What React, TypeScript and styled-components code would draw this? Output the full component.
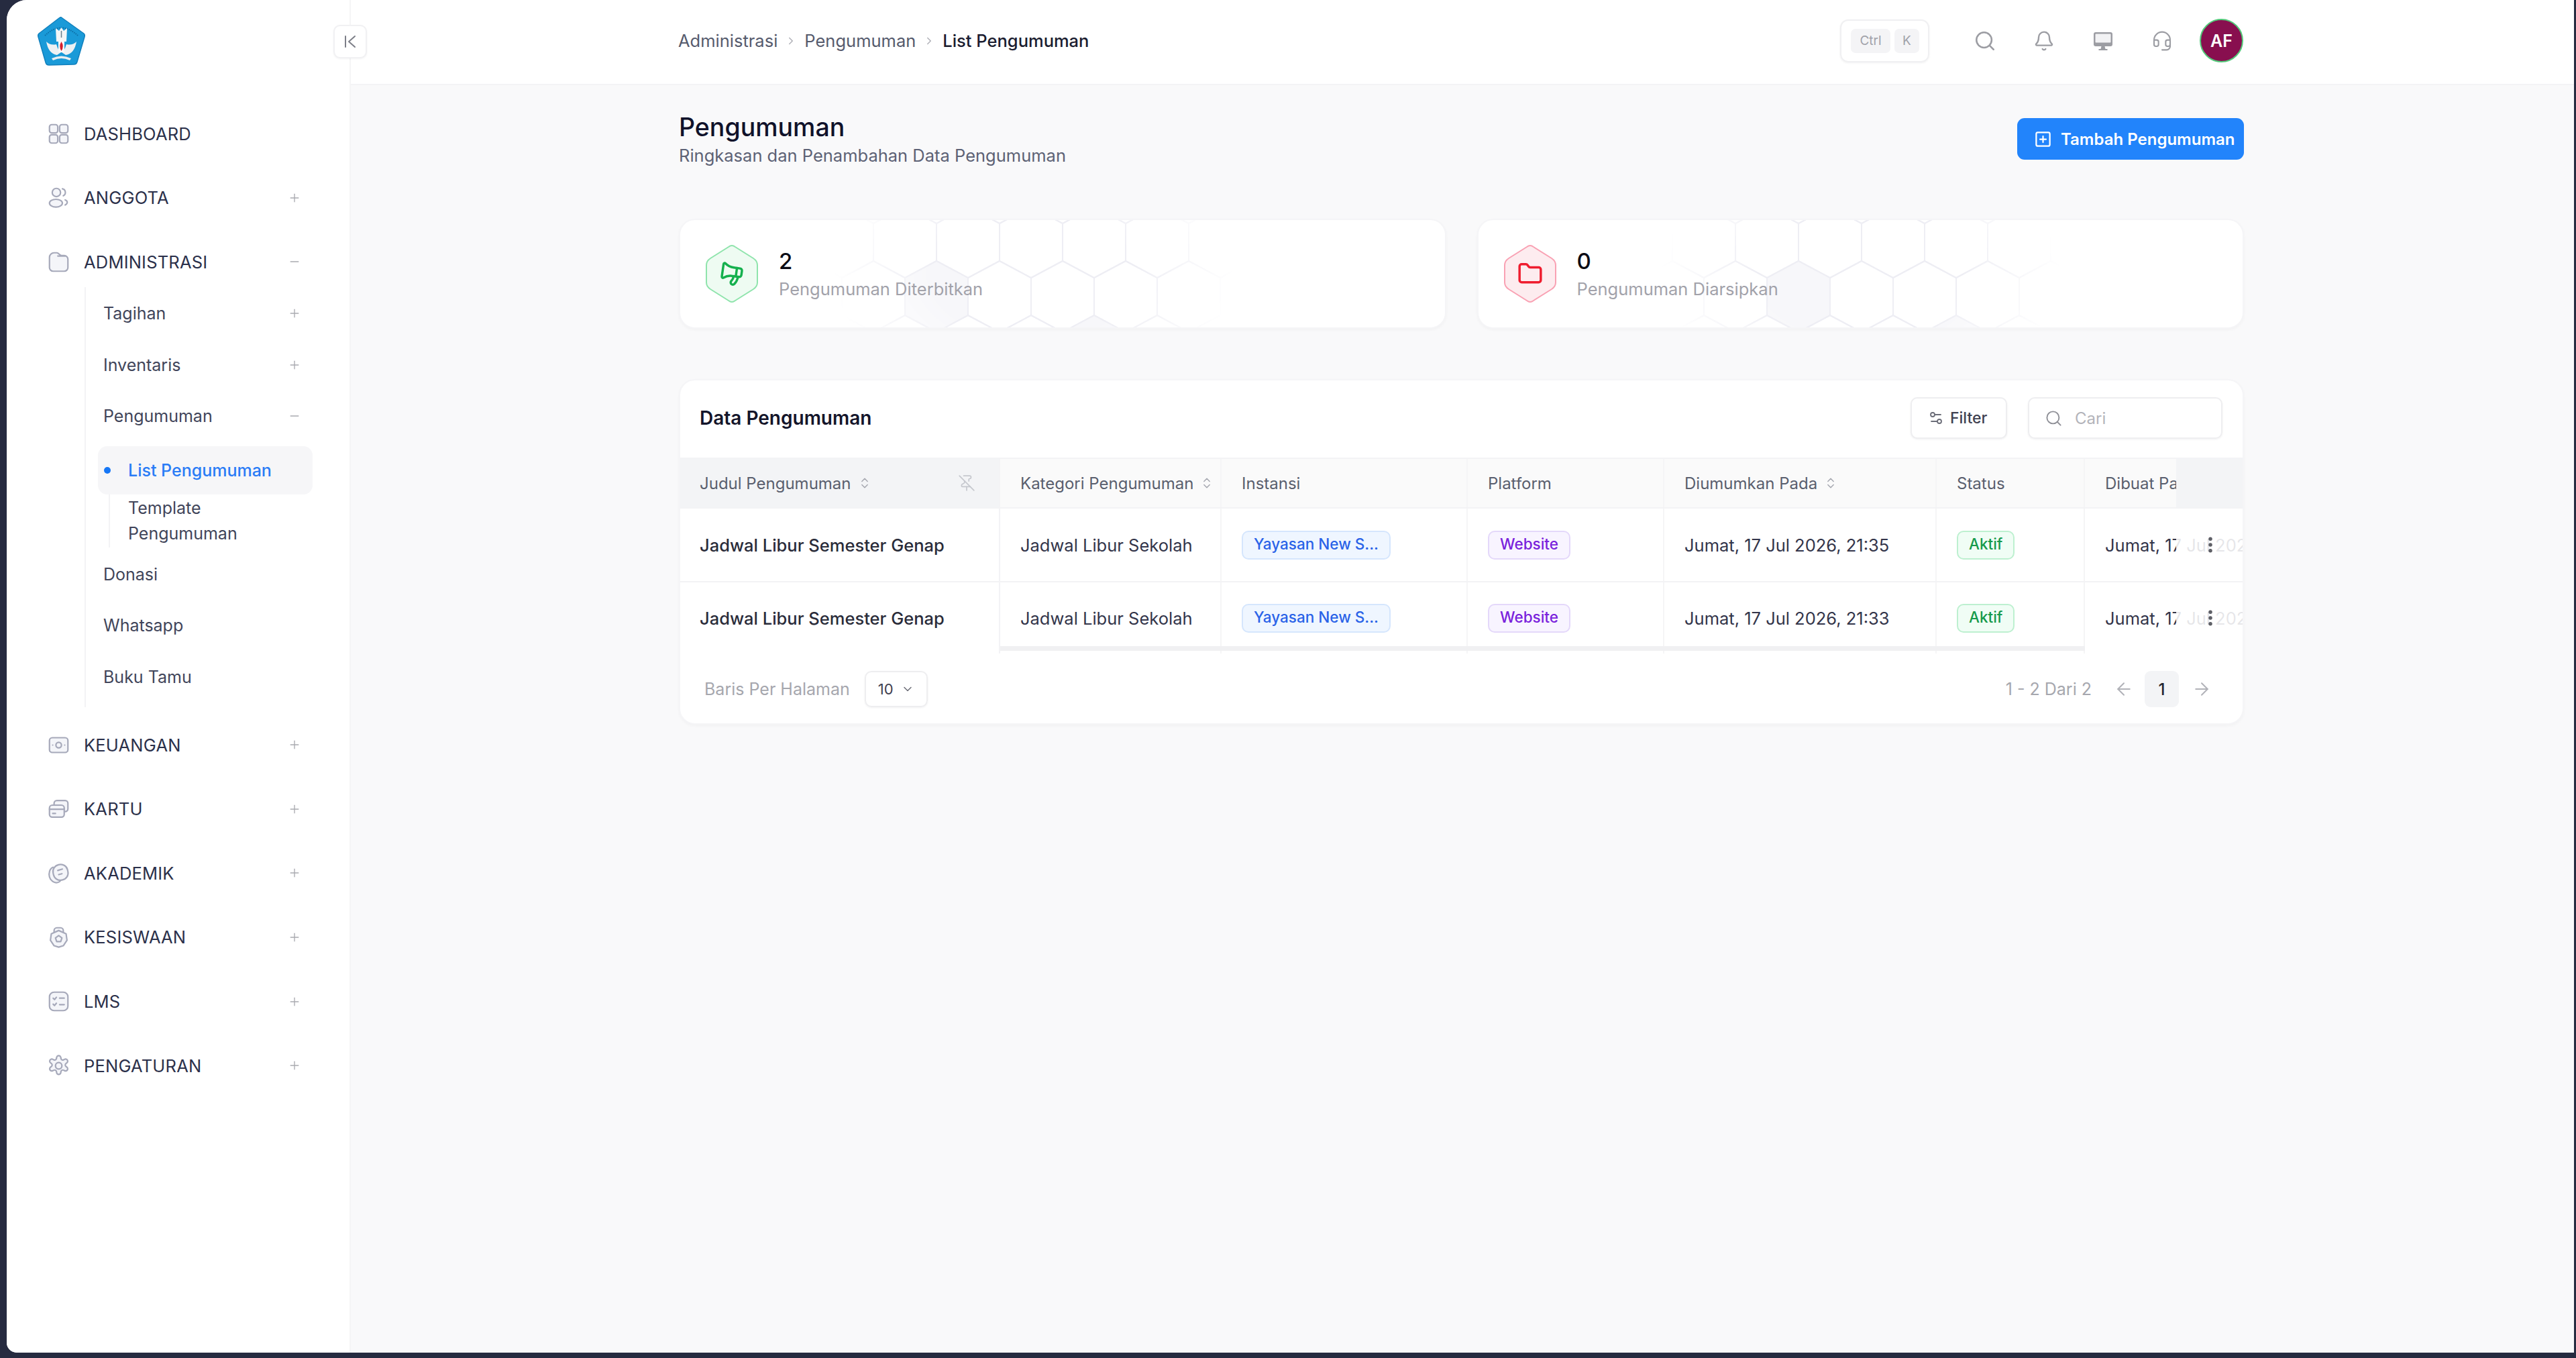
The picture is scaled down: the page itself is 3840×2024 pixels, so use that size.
import React from "react";
import styled, { createGlobalStyle } from "styled-components";
import {
  Search, Bell, Headset, ChevronRight, Plus, Minus, PinOff, ChevronsUpDown, Settings2,
  EllipsisVertical, ArrowLeft, ArrowRight, ChevronDown, SquarePlus, Megaphone, Folder,
} from "lucide-react";

const Global = createGlobalStyle`
  html, body { margin: 0; padding: 0; background: #262b40; }
  body { font-family: Inter, "Liberation Sans", sans-serif; width: 3840px; height: 2024px; overflow: hidden; }
  * { box-sizing: border-box; }
`;

const Frame = styled.div`
  display: flex;
  margin-left: 10px;
  width: 3827px;
  height: 2016px;
  border-radius: 30px 0 0 15px;
  overflow: hidden;
  background: #f9f9fa;
`;

const Sidebar = styled.aside`
  position: relative;
  width: 513px;
  flex: none;
  background: #fff;
  border-right: 2px solid #f5f5f6;
  padding-top: 24px;
`;
const LogoBox = styled.div`
  margin-left: 45px;
  width: 73px;
  height: 75px;
`;
const Collapse = styled.button`
  position: absolute;
  top: 37px;
  right: -26px;
  width: 50px;
  height: 50px;
  z-index: 3;
  padding: 0;
  display: flex;
  align-items: center;
  justify-content: center;
  background: #fff;
  border: 2px solid #f1f1f3;
  border-radius: 10px;
  box-shadow: 0 1px 3px rgba(20, 20, 40, 0.05);
`;
const Nav = styled.nav`
  display: flex;
  flex-direction: column;
  gap: 19.6px;
  margin: 62px 0 0 61px;
  width: 378px;
`;
const NavRow = styled.div`
  display: flex;
  align-items: center;
  height: 76px;
  color: #2b304a;
  font-size: 25.5px;
  letter-spacing: 0.2px;
`;
const NavIcon = styled.svg`
  width: 33px;
  height: 33px;
  flex: none;
  margin-right: 21px;
  fill: #f4f5f9;
  stroke: #a6a9ba;
  stroke-width: 1.6;
  stroke-linecap: round;
  stroke-linejoin: round;
`;
const NavLabel = styled.span`
  flex: 1;
`;
const Toggle = styled.span`
  display: flex;
  color: #a9aab0;
`;
const SubList = styled.div`
  margin: -19.6px 0 -1.6px 55px;
  border-left: 2px solid #f3f3f5;
  padding: 1px 0 7px 26px;
`;
const SubRow = styled.div`
  display: flex;
  align-items: center;
  justify-content: space-between;
  height: 76.5px;
  color: #41455a;
  font-size: 25px;
`;
const ChildList = styled.div`
  margin: 6px 0 2px 8px;
  border-left: 2px solid #f3f3f5;
  padding-left: 27px;
`;
const ActiveChild = styled.div`
  display: flex;
  align-items: center;
  gap: 26px;
  width: 320px;
  height: 72px;
  margin-left: -45px;
  padding-left: 9px;
  border-radius: 14px;
  background: #f6f6f8;
  color: #2a7cf6;
  font-size: 25px;
  font-weight: 500;
`;
const Dot = styled.i`
  width: 10px;
  height: 10px;
  border-radius: 50%;
  background: #1677f6;
`;
const Child = styled.div`
  padding-top: 1px;
  height: 79px;
  line-height: 38px;
  color: #41455a;
  font-size: 25px;
`;

const Main = styled.main`
  flex: 1;
  min-width: 0;
`;
const TopBar = styled.header`
  height: 127px;
  background: #fff;
  border-bottom: 2px solid #f3f3f5;
`;
const TopInner = styled.div`
  display: flex;
  align-items: center;
  width: 2333px;
  height: 121px;
  margin-left: 488px;
`;
const Crumbs = styled.div`
  display: flex;
  align-items: center;
  gap: 11px;
  flex: 1;
  font-size: 25.5px;
  color: #565b6d;
`;
const Current = styled.span`
  color: #1b1d30;
  font-weight: 500;
`;
const Kbd = styled.div`
  display: flex;
  gap: 6px;
  align-items: center;
  width: 133px;
  height: 64px;
  padding-left: 14px;
  border: 2px solid #f0f0f2;
  border-radius: 12px;
  margin-right: 39px;
  box-shadow: 0 1px 3px rgba(20, 20, 40, 0.06);
`;
const Key = styled.span<{ $w: number }>`
  display: flex;
  align-items: center;
  justify-content: center;
  width: ${(p) => p.$w}px;
  height: 36px;
  border-radius: 7px;
  background: #f4f4f6;
  color: #a1a2a9;
  font-size: 19px;
`;
const TopIcon = styled.span`
  display: flex;
  justify-content: center;
  width: 88px;
  margin-left: 0;
  color: #9c9da3;
`;
const Avatar = styled.div`
  display: flex;
  align-items: center;
  justify-content: center;
  width: 65px;
  height: 65px;
  margin-left: 12px;
  border-radius: 50%;
  border: 2px solid #53c97a;
  background: #880f4f;
  color: #fff;
  font-size: 25px;
  font-weight: 600;
`;

const Content = styled.div`
  width: 2333px;
  margin-left: 489px;
`;
const PageHead = styled.div`
  display: flex;
  justify-content: space-between;
  align-items: flex-start;
  padding-top: 41px;
`;
const Title = styled.h1`
  margin: 0;
  font-size: 37.5px;
  line-height: 44px;
  font-weight: 500;
  color: #10122a;
`;
const Subtitle = styled.p`
  margin: 2px 0 0;
  font-size: 25.5px;
  line-height: 36px;
  color: #5d6275;
`;
const PrimaryButton = styled.button`
  display: flex;
  align-items: center;
  gap: 13px;
  height: 62px;
  width: 338px;
  margin-top: 8px;
  padding-left: 25px;
  border: 0;
  border-radius: 11px;
  background: #2284fb;
  color: #fff;
  font: 600 24px Inter, sans-serif;
`;

const Stats = styled.div`
  display: grid;
  grid-template-columns: 1fr 1fr;
  gap: 46px;
  margin-top: 76px;
`;
const StatCard = styled.div`
  position: relative;
  display: flex;
  align-items: center;
  gap: 31px;
  height: 164px;
  padding-left: 38px;
  background: #fff;
  border: 2px solid #f5f5f7;
  border-radius: 24px;
  box-shadow: 0 2px 4px rgba(20, 20, 40, 0.03);
  overflow: hidden;
`;
const HexBg = styled.svg<{ $cx: number }>`
  position: absolute;
  inset: 0;
  width: 100%;
  height: 100%;
  fill: none;
  stroke: #eeeef4;
  stroke-width: 2;
  mask-image: radial-gradient(ellipse 300px 190px at ${(p) => p.$cx}px 80px, #000 50%, transparent 100%);
`;
const HexIcon = styled.div`
  position: relative;
  width: 78px;
  height: 88px;
  flex: none;
  display: flex;
  align-items: center;
  justify-content: center;
`;
const HexShape = styled.svg`
  position: absolute;
  inset: 0;
`;
const StatText = styled.div`
  position: relative;
`;
const StatNumber = styled.div`
  font-size: 33px;
  line-height: 42px;
  font-weight: 500;
  color: #0b0b14;
`;
const StatLabel = styled.div`
  margin-top: 4px;
  font-size: 25.5px;
  line-height: 34px;
  color: #a2a2aa;
`;

const TableCard = styled.section`
  margin-top: 75px;
  height: 515px;
  background: #fff;
  border: 2px solid #f5f5f7;
  border-radius: 24px;
  box-shadow: 0 2px 4px rgba(20, 20, 40, 0.03);
  overflow: hidden;
`;
const TableHead = styled.div`
  display: flex;
  align-items: center;
  height: 115px;
  padding: 0 30px 3px 29px;
  gap: 31px;
`;
const TableTitle = styled.h2`
  flex: 1;
  margin: 0;
  font-size: 28px;
  font-weight: 600;
  color: #14152a;
`;
const FilterButton = styled.button`
  display: flex;
  align-items: center;
  gap: 9px;
  width: 144px;
  height: 62px;
  padding-left: 24px;
  background: #fff;
  border: 2px solid #eeeef0;
  border-radius: 10px;
  box-shadow: 0 1px 3px rgba(20, 20, 40, 0.06);
  color: #3f4150;
  font: 500 23px Inter, sans-serif;
`;
const SearchBox = styled.div`
  display: flex;
  align-items: center;
  gap: 18px;
  width: 290px;
  height: 62px;
  padding-left: 23px;
  border: 2px solid #eeeef0;
  border-radius: 10px;
  box-shadow: 0 1px 3px rgba(20, 20, 40, 0.06);
  color: #b3b4ba;
  font-size: 24px;
`;
const TableWrap = styled.div`
  position: relative;
`;
const Row = styled.div<{ $h: number; $head?: boolean }>`
  display: grid;
  grid-template-columns: 477px 330px 367px 293px 406px 221px 235px;
  height: ${(p) => p.$h}px;
  background: ${(p) => (p.$head ? "#fafafa" : "#fff")};
  border-top: 2px solid #f3f3f5;
`;
const Cell = styled.div<{ $head?: boolean; $pin?: boolean; $strong?: boolean }>`
  display: flex;
  align-items: center;
  gap: 10px;
  min-width: 0;
  overflow: hidden;
  white-space: nowrap;
  padding-left: ${(p) => (p.$pin ? 29 : 30)}px;
  border-right: ${(p) => (p.$pin ? "2px solid #f3f3f5" : "2px solid #f5f5f6")};
  background: ${(p) => (p.$pin && p.$head ? "#f3f4f6" : "transparent")};
  font-size: ${(p) => (p.$head ? 24 : 25.5)}px;
  font-weight: ${(p) => (p.$strong ? 500 : 400)};
  color: ${(p) => (p.$head ? "#5a5f6e" : p.$strong ? "#2a2c3a" : "#33354a")};
  &:last-child { border-right: 0; }
`;
const Spacer = styled.span`
  flex: 1;
`;
const PinWrap = styled.span`
  display: flex;
  margin-right: 35px;
  color: #c6c8ce;
`;
const SortIcon = styled.span`
  display: flex;
  color: #a6a8b0;
`;
const Tone = {
  blue: ["#eff6ff", "#d5e6fd", "#2a63e8"],
  purple: ["#f8f4ff", "#e4d8fa", "#7a22dc"],
  green: ["#f0fdf5", "#bdf0d0", "#159a4b"],
} as const;
const Badge = styled.span<{ $tone: keyof typeof Tone }>`
  display: inline-flex;
  justify-content: center;
  height: 43px;
  padding: 3px 16px 0;
  line-height: 30px;
  border-radius: 10px;
  border: 2px solid ${(p) => Tone[p.$tone][1]};
  background: ${(p) => Tone[p.$tone][0]};
  color: ${(p) => Tone[p.$tone][2]};
  font-size: 22.5px;
  font-weight: 500;
`;
const PinnedHeadCover = styled.div`
  position: absolute;
  top: 0;
  right: 0;
  width: 99px;
  height: 74px;
  background: #f3f4f6;
`;
const PinnedBodyCover = styled.div<{ $top: number; $h: number }>`
  position: absolute;
  top: ${(p) => p.$top}px;
  right: 0;
  width: 99px;
  height: ${(p) => p.$h}px;
  background: rgba(255, 255, 255, 0.88);
  display: flex;
  align-items: center;
  justify-content: center;
  padding-left: 2px;
  color: #5b5c63;
`;
const Scrollbar = styled.div`
  position: absolute;
  left: 477px;
  top: 281px;
  width: 1617px;
  height: 7px;
  background: #f0f0f2;
`;
const Footer = styled.div`
  display: flex;
  align-items: center;
  height: 106px;
  padding: 0 46px 0 36px;
  font-size: 25px;
  color: #a6a7ae;
`;
const SelectBox = styled.div`
  display: flex;
  align-items: center;
  justify-content: space-between;
  width: 94px;
  height: 54px;
  margin-left: 22px;
  padding: 0 18px;
  border: 2px solid #eeeef0;
  border-radius: 10px;
  box-shadow: 0 1px 3px rgba(20, 20, 40, 0.06);
  color: #3f4150;
  font-size: 22px;
`;
const ArrowBtn = styled.span`
  display: flex;
  color: #b1b2b8;
  margin: 0 16px 0 33px;
`;
const ArrowBtnNext = styled.span`
  display: flex;
  color: #b1b2b8;
  margin-left: 19px;
`;
const PageNum = styled.span`
  display: flex;
  align-items: center;
  justify-content: center;
  width: 51px;
  height: 54px;
  border-radius: 9px;
  background: #f3f4f6;
  color: #24252f;
  font-size: 24px;
  font-weight: 500;
`;

const Logo = () => (
  <svg width="73" height="75" viewBox="0 0 73 75">
    <path d="M36.5 2 L70 26 Q72 28 71 31 L60 68 Q59 72 55 72 L18 73 Q14 73 13 69 L2 31 Q1 28 3 26 L33 3 Q36 1 36.5 2Z" fill="#1a9ad8" stroke="#1280bd" strokeWidth="1.5" />
    <path d="M12 29 Q36 6 61 29" fill="none" stroke="#0d6ea6" strokeWidth="2" strokeDasharray="1.5 1.5" />
    <path d="M28 18 L33 22 L36.5 17 L40 22 L45 18 L44 38 L29 38Z" fill="#f4f6f7" />
    <path d="M14 38 Q20 44 29 42 Q32 52 36 54 L30 58 Q17 56 14 38Z" fill="#eef1f3" />
    <path d="M59 38 Q53 44 44 42 Q41 52 37 54 L43 58 Q56 56 59 38Z" fill="#eef1f3" />
    <rect x="32" y="34" width="9" height="20" rx="2" fill="#f8f8f8" />
    <path d="M36.5 38 Q41 45 36.5 52 Q32 45 36.5 38Z" fill="#d5202e" />
    <path d="M22 63 Q36.5 56 51 63 L49 66 Q36.5 60 24 66Z" fill="#e9eef0" />
    <path d="M36.5 22v10" stroke="#6a7f8d" strokeWidth="1.5" />
  </svg>
);

const CollapseIcon = () => (
  <svg width="22" height="22" viewBox="0 0 22 22" fill="none" stroke="#7d7f88" strokeWidth="2" strokeLinecap="round" strokeLinejoin="round">
    <path d="M4 3v16M18 3l-9 8 9 8" />
  </svg>
);

const icons: Record<string, React.ReactNode> = {
  dashboard: (
    <>
      <rect x="2" y="2" width="9" height="9" rx="2.4" />
      <rect x="13" y="2" width="9" height="9" rx="2.4" />
      <rect x="2" y="13" width="9" height="9" rx="2.4" />
      <rect x="13" y="13" width="9" height="9" rx="2.4" />
    </>
  ),
  anggota: (
    <>
      <circle cx="9.5" cy="6.5" r="4.5" />
      <ellipse cx="9" cy="18" rx="7" ry="4.2" />
      <path d="M16 2.5a4 4 0 0 1 1 7.5M19 14.5c3 1 3 4 0 5.5" fill="none" />
    </>
  ),
  folder: <path d="M2 7a5 5 0 0 1 5-5h3c2 0 3 3 5 3h3a4 4 0 0 1 4 4v9a4 4 0 0 1-4 4H6a4 4 0 0 1-4-4Z M11 5.5h8" />,
  keuangan: (
    <>
      <rect x="2" y="4" width="20" height="16" rx="3" />
      <circle cx="12" cy="12" r="3" fill="none" />
      <path d="M5.5 12h.01M18.5 12h.01" />
    </>
  ),
  kartu: (
    <>
      <path d="M7 7V6a3 3 0 0 1 3-3h9a3 3 0 0 1 3 3v6a3 3 0 0 1-3 3h-1" />
      <rect x="2" y="8" width="16" height="13" rx="3" />
      <path d="M2 12.5h16M5.5 17h3" fill="none" />
    </>
  ),
  akademik: (
    <>
      <path d="M6 5.5C2 7 1 12 2 16c1 4 5 7 9 6 2-.4 3-2 3-2" />
      <rect x="6" y="2.5" width="16" height="17" rx="7.5" transform="rotate(-12 14 11)" />
      <path d="M11 9l5-1.5M12 13.5l3.500-1" fill="none" />
    </>
  ),
  kesiswaan: (
    <>
      <path d="M7 7V5a3 3 0 0 1 3-3h4a3 3 0 0 1 3 3v2" />
      <path d="M12 5l8 3.500 1 7-4 6-5 1.500-5-1.500-4-6 1-7Z" />
      <path d="M12 10.500l3.500 2.500-1.300 4H9.800l-1.300-4Z" fill="none" />
    </>
  ),
  lms: (
    <>
      <rect x="2" y="2" width="20" height="20" rx="5" />
      <path d="M6 8.500l1.500 1.500 2-2.500M13 8.500h5M6 15l1.500 1.500 2-2.500M13 15.500h5" fill="none" />
    </>
  ),
  gear: (
    <>
      <path d="M9.700 3.300a2 2 0 0 1 4.600 0l.2 1a2 2 0 0 0 2.900 1.200l.9-.5a2 2 0 0 1 2.300 4l-.8.6a2 2 0 0 0 0 3l.8.700a2 2 0 0 1-2.300 4l-.9-.5a2 2 0 0 0-2.900 1.200l-.2 1a2 2 0 0 1-4.600 0l-.2-1a2 2 0 0 0-2.900-1.200l-.9.500a2 2 0 0 1-2.300-4l.8-.700a2 2 0 0 0 0-3l-.8-.6a2 2 0 0 1 2.300-4l.9.500a2 2 0 0 0 2.900-1.200Z" />
      <circle cx="12" cy="12" r="3.500" fill="none" />
    </>
  ),
};

const PlusToggle = () => <Toggle><Plus size={20} strokeWidth={1.6} /></Toggle>;
const MinusToggle = () => <Toggle><Minus size={20} strokeWidth={1.6} /></Toggle>;

const MainItem = ({ icon, label, open }: { icon: string; label: string; open?: boolean | null }) => (
  <NavRow>
    <NavIcon viewBox="0 0 24 24">{icons[icon]}</NavIcon>
    <NavLabel>{label}</NavLabel>
    {open === true && <MinusToggle />}
    {open === false && <PlusToggle />}
  </NavRow>
);

const hexPath = (cx: number, cy: number) =>
  `M${cx} ${cy - 53}L${cx + 47} ${cy - 28}V${cy + 28}L${cx} ${cy + 53}L${cx - 47} ${cy + 28}V${cy - 28}Z`;

const HexPattern = ({ offset, cx }: { offset: number; cx: number }) => {
  const hexes: React.ReactNode[] = [];
  [-48, 33, 114, 195].forEach((y, r) => {
    for (let k = -4; k < 8; k++) {
      const x = (r % 2 === 0 ? 382 : 429) + offset + 94 * k;
      const filled = (r === 2 && k === 0) || (r === 3 && k === 2);
      hexes.push(<path key={`${r}-${k}`} d={hexPath(x, y)} fill={filled ? "#f7f7fa" : "none"} />);
    }
  });
  return <HexBg $cx={cx}>{hexes}</HexBg>;
};

const Hexagon = ({ fill, stroke }: { fill: string; stroke: string }) => (
  <HexShape width="78" height="88" viewBox="0 0 78 88">
    <path d="M34 4Q39 0 44 4L71 21Q77 25 77 31V57Q77 63 71 67L44 84Q39 88 34 84L7 67Q1 63 1 57V31Q1 25 7 21Z" fill={fill} stroke={stroke} strokeWidth="2" />
  </HexShape>
);

const Stat = ({ n, label, icon, fill, stroke, offset, cx }: { n: string; label: string; icon: React.ReactNode; fill: string; stroke: string; offset: number; cx: number }) => (
  <StatCard>
    <HexPattern offset={offset} cx={cx} />
    <HexIcon>
      <Hexagon fill={fill} stroke={stroke} />
      {icon}
    </HexIcon>
    <StatText>
      <StatNumber>{n}</StatNumber>
      <StatLabel>{label}</StatLabel>
    </StatText>
  </StatCard>
);

const Sort = () => <SortIcon><ChevronsUpDown size={20} strokeWidth={1.8} /></SortIcon>;

const rows = [
  { h: 110, date: "Jumat, 17 Jul 2026, 21:35" },
  { h: 108, date: "Jumat, 17 Jul 2026, 21:33" },
];

const MonitorIcon = () => (
  <svg width="30" height="30" viewBox="0 0 30 30">
    <path d="M4 2h22a3 3 0 0 1 3 3v15a3 3 0 0 1-3 3H4a3 3 0 0 1-3-3V5a3 3 0 0 1 3-3Z" fill="#9c9da3" />
    <rect x="3.500" y="4.500" width="23" height="13" rx="1" fill="#f2f2f4" />
    <path d="M12.500 23h5l1 4h3v2H8.500v-2h3Z" fill="#9c9da3" />
  </svg>
);

export default function App() {
  return (
    <>
      <Global />
      <Frame>
        <Sidebar>
          <LogoBox><Logo /></LogoBox>
          <Collapse><CollapseIcon /></Collapse>
          <Nav>
            <MainItem icon="dashboard" label="DASHBOARD" open={null} />
            <MainItem icon="anggota" label="ANGGOTA" open={false} />
            <MainItem icon="folder" label="ADMINISTRASI" open />
            <SubList>
              <SubRow>Tagihan<PlusToggle /></SubRow>
              <SubRow>Inventaris<PlusToggle /></SubRow>
              <SubRow>Pengumuman<MinusToggle /></SubRow>
              <ChildList>
                <ActiveChild><Dot />List Pengumuman</ActiveChild>
                <Child>Template<br />Pengumuman</Child>
              </ChildList>
              <SubRow>Donasi</SubRow>
              <SubRow>Whatsapp</SubRow>
              <SubRow>Buku Tamu</SubRow>
            </SubList>
            <MainItem icon="keuangan" label="KEUANGAN" open={false} />
            <MainItem icon="kartu" label="KARTU" open={false} />
            <MainItem icon="akademik" label="AKADEMIK" open={false} />
            <MainItem icon="kesiswaan" label="KESISWAAN" open={false} />
            <MainItem icon="lms" label="LMS" open={false} />
            <MainItem icon="gear" label="PENGATURAN" open={false} />
          </Nav>
        </Sidebar>
        <Main>
          <TopBar>
            <TopInner>
              <Crumbs>
                <span>Administrasi</span>
                <ChevronRight size={18} color="#b0b1b8" />
                <span>Pengumuman</span>
                <ChevronRight size={18} color="#b0b1b8" />
                <Current>List Pengumuman</Current>
              </Crumbs>
              <Kbd><Key $w={59}>Ctrl</Key><Key $w={37}>K</Key></Kbd>
              <TopIcon><Search size={34} strokeWidth={1.8} /></TopIcon>
              <TopIcon><Bell size={32} strokeWidth={1.8} /></TopIcon>
              <TopIcon><MonitorIcon /></TopIcon>
              <TopIcon><Headset size={32} strokeWidth={1.6} /></TopIcon>
              <Avatar>AF</Avatar>
            </TopInner>
          </TopBar>
          <Content>
            <PageHead>
              <div>
                <Title>Pengumuman</Title>
                <Subtitle>Ringkasan dan Penambahan Data Pengumuman</Subtitle>
              </div>
              <PrimaryButton><SquarePlus size={27} strokeWidth={2} />Tambah Pengumuman</PrimaryButton>
            </PageHead>
            <Stats>
              <Stat n="2" label="Pengumuman Diterbitkan" fill="#eefbf2" stroke="#8fe4ac" offset={0} cx={526}
                icon={<Megaphone size={38} color="#15b04e" strokeWidth={2.2} style={{ position: "relative", transform: "scaleX(-1) rotate(-8deg)" }} />} />
              <Stat n="0" label="Pengumuman Diarsipkan" fill="#fdecef" stroke="#f9a1b3" offset={95} cx={570}
                icon={<Folder size={38} color="#ef1d2f" strokeWidth={2.2} style={{ position: "relative" }} />} />
            </Stats>
            <TableCard>
              <TableHead>
                <TableTitle>Data Pengumuman</TableTitle>
                <FilterButton><Settings2 size={24} strokeWidth={1.8} color="#6b6d78" />Filter</FilterButton>
                <SearchBox><Search size={27} strokeWidth={1.7} color="#8f9097" />Cari</SearchBox>
              </TableHead>
              <TableWrap>
                <Row $h={74} $head>
                  <Cell $head $pin>Judul Pengumuman<Sort /><Spacer /><PinWrap><PinOff size={26} strokeWidth={1.6} /></PinWrap></Cell>
                  <Cell $head>Kategori Pengumuman<Sort /></Cell>
                  <Cell $head>Instansi</Cell>
                  <Cell $head>Platform</Cell>
                  <Cell $head>Diumumkan Pada<Sort /></Cell>
                  <Cell $head>Status</Cell>
                  <Cell $head>Dibuat Pada</Cell>
                </Row>
                {rows.map((r) => (
                  <Row key={r.date} $h={r.h}>
                    <Cell $strong $pin>Jadwal Libur Semester Genap</Cell>
                    <Cell>Jadwal Libur Sekolah</Cell>
                    <Cell><Badge $tone="blue">Yayasan New S...</Badge></Cell>
                    <Cell><Badge $tone="purple">Website</Badge></Cell>
                    <Cell>{r.date}</Cell>
                    <Cell><Badge $tone="green">Aktif</Badge></Cell>
                    <Cell>{r.date}</Cell>
                  </Row>
                ))}
                <PinnedHeadCover />
                <PinnedBodyCover $top={76} $h={108}><EllipsisVertical size={30} strokeWidth={2.4} /></PinnedBodyCover>
                <PinnedBodyCover $top={186} $h={106}><EllipsisVertical size={30} strokeWidth={2.4} /></PinnedBodyCover>
                <Scrollbar />
              </TableWrap>
              <Footer>
                Baris Per Halaman
                <SelectBox>10<ChevronDown size={20} strokeWidth={1.8} color="#6d6e78" /></SelectBox>
                <Spacer />
                1 - 2 Dari 2
                <ArrowBtn><ArrowLeft size={30} strokeWidth={1.6} /></ArrowBtn>
                <PageNum>1</PageNum>
                <ArrowBtnNext><ArrowRight size={30} strokeWidth={1.6} /></ArrowBtnNext>
              </Footer>
            </TableCard>
          </Content>
        </Main>
      </Frame>
    </>
  );
}
